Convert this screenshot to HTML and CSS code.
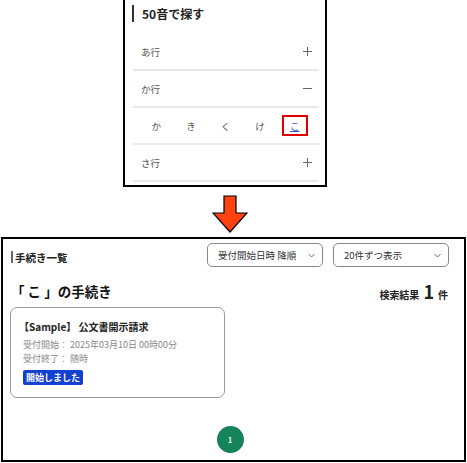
FILE: index.html
```html
<!DOCTYPE html>
<html lang="ja">
<head>
    <meta charset="UTF-8">
    <meta name="viewport" content="width=device-width, initial-scale=1.0">
    <link rel="stylesheet" href="styles.css">
    <title>50音で探す</title>
</head>
<body>
    <div class="search-panel">
        <div class="panel-head">
            <span class="bar"></span>
            <span class="panel-title">50音で探す</span>
        </div>
        <div class="kana-list">
            <div class="kana-row">
                <span>あ行</span>
                <svg class="toggle" width="9" height="9" viewBox="0 0 9 9"><path d="M0 4.5H9M4.5 0V9" /></svg>
            </div>
            <div class="kana-row">
                <span>か行</span>
                <svg class="toggle" width="9" height="9" viewBox="0 0 9 9"><path d="M0 4.5H9" /></svg>
            </div>
            <div class="kana-row kana-chars">
                <span class="kana">か</span>
                <span class="kana">き</span>
                <span class="kana">く</span>
                <span class="kana">け</span>
                <span class="kana"><span class="kana-selected">こ</span></span>
            </div>
            <div class="kana-row">
                <span>さ行</span>
                <svg class="toggle" width="9" height="9" viewBox="0 0 9 9"><path d="M0 4.5H9M4.5 0V9" /></svg>
            </div>
        </div>
    </div>

    <div class="arrow-wrap">
        <svg width="36" height="40" viewBox="0 0 36 40">
            <polygon points="12,1 24,1 24,18 35,18 18,37 1,18 12,18" fill="#ff4310" stroke="#000" stroke-width="1.2" stroke-linejoin="miter" />
        </svg>
    </div>

    <div class="result-panel">
        <div class="result-head">
            <span class="bar bar-small"></span>
            <span class="result-title">手続き一覧</span>
            <div class="selects">
                <div class="select">
                    <span>受付開始日時 降順</span>
                    <svg width="7" height="5" viewBox="0 0 7 5"><path d="M0.5 1L3.5 4L6.5 1" /></svg>
                </div>
                <div class="select">
                    <span>20件ずつ表示</span>
                    <svg width="7" height="5" viewBox="0 0 7 5"><path d="M0.5 1L3.5 4L6.5 1" /></svg>
                </div>
            </div>
        </div>

        <div class="title-row">
            <h1 class="list-title">「 こ 」の手続き</h1>
            <div class="count">検索結果<span class="count-num">1</span>件</div>
        </div>

        <div class="card">
            <div class="card-title">【Sample】 公文書開示請求</div>
            <div class="card-info">受付開始： 2025年03月10日 00時00分</div>
            <div class="card-info">受付終了： 随時</div>
            <span class="badge">開始しました</span>
        </div>

        <div class="pager">
            <span class="page-current">1</span>
        </div>
    </div>
</body>
</html>
```

FILE: styles.css
```css
body {
    margin: 0;
    background: #fff;
    font-family: "Noto Sans CJK JP", "Noto Sans", sans-serif;
    color: #222;
}

/* top: 50音 panel */
.search-panel {
    margin-left: 123px;
    width: 204px;
    height: 187px;
    box-sizing: border-box;
    border: 2px solid #000;
    border-top: none;
}

.panel-head {
    display: flex;
    align-items: center;
    gap: 8px;
    padding: 5px 0 12px 7px;
}

.bar {
    display: block;
    width: 2px;
    height: 17px;
    background: #333;
}

.panel-title {
    font-size: 12px;
    font-weight: bold;
    line-height: 17px;
}

.kana-list {
    margin: 0 6px 0 8px;
}

.kana-row {
    display: flex;
    justify-content: space-between;
    align-items: center;
    height: 35px;
    padding: 0 7px 0 8px;
    border-bottom: 2px solid #e8e8e8;
    font-size: 9.5px;
    color: #555;
}

.toggle path {
    stroke: #666;
    stroke-width: 1;
    fill: none;
}

.kana-chars {
    justify-content: flex-start;
    padding-left: 6px;
}

.kana {
    width: 35px;
    text-align: center;
}

.kana-selected {
    display: inline-block;
    width: 26px;
    height: 21px;
    line-height: 19px;
    box-sizing: border-box;
    border: 2px solid #e00000;
    color: #3a5bc7;
    text-decoration: underline;
}

/* arrow */
.arrow-wrap {
    height: 50px;
    padding-left: 212px;
    box-sizing: border-box;
    padding-top: 8px;
}

.arrow-wrap svg {
    display: block;
}

/* bottom: result panel */
.result-panel {
    margin-left: 1px;
    width: 465px;
    height: 225px;
    box-sizing: border-box;
    border: 2px solid #000;
    padding: 4px 15px 0 8px;
}

.result-head {
    display: flex;
    align-items: center;
    height: 24px;
}

.bar-small {
    height: 12px;
    background: #666;
    margin-top: 4px;
}

.result-title {
    margin-left: 2px;
    margin-top: 4px;
    font-size: 10.5px;
    font-weight: bold;
}

.selects {
    display: flex;
    gap: 10px;
    margin-left: auto;
}

.select {
    display: flex;
    justify-content: space-between;
    align-items: center;
    width: 116px;
    height: 24px;
    box-sizing: border-box;
    padding: 0 7px 0 10px;
    border: 1px solid #888;
    border-radius: 5px;
    font-size: 9.5px;
    color: #333;
}

.select path {
    stroke: #666;
    stroke-width: 1;
    fill: none;
}

.title-row {
    display: flex;
    justify-content: space-between;
    align-items: center;
    height: 24px;
    margin-top: 12px;
}

.list-title {
    margin: 0;
    font-size: 13.5px;
    font-weight: bold;
    color: #111;
}

.count {
    display: flex;
    align-items: baseline;
    font-size: 10px;
    font-weight: bold;
    margin-right: 1px;
}

.count-num {
    font-size: 18px;
    margin: 0 4px;
}

.card {
    width: 215px;
    height: 91px;
    box-sizing: border-box;
    margin-top: 4px;
    margin-left: -1px;
    padding: 11px 8px 0 12px;
    border: 1px solid #999;
    border-radius: 7px;
}

.card-title {
    font-size: 10px;
    font-weight: bold;
    line-height: 16px;
    margin-left: -4px;
    margin-bottom: 3px;
}

.card-info {
    font-size: 9px;
    line-height: 14px;
    color: #888;
}

.badge {
    display: block;
    width: fit-content;
    margin-top: 4px;
    padding: 0 3px;
    height: 15px;
    line-height: 15px;
    background: #1240d0;
    color: #fff;
    font-size: 9px;
    font-weight: bold;
    border-radius: 2px;
}

.pager {
    display: flex;
    justify-content: center;
    margin-top: 28px;
}

.page-current {
    display: flex;
    justify-content: center;
    align-items: center;
    width: 27px;
    height: 27px;
    border-radius: 50%;
    background: #16845a;
    color: #fff;
    font-size: 7px;
    font-weight: bold;
}
```
